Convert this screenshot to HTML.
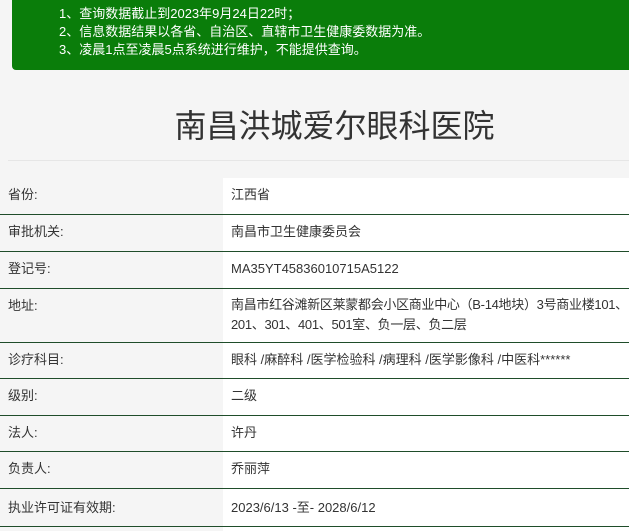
<!DOCTYPE html><html><head><meta charset="utf-8"><style>
body{margin:0;width:629px;height:531px;overflow:hidden;background:#f5f5f5;font-family:"Liberation Sans","Noto Sans CJK SC",sans-serif;color:#333}
.g{position:absolute;left:12px;top:-5px;width:630px;height:75px;background:#0a7d0a;border-radius:4px;color:#fff;font-size:13px;line-height:16px}
.g div{position:absolute;left:47px}
h1{position:absolute;top:104px;left:0;width:669px;text-align:center;margin:0;font-weight:normal;font-size:32px;color:#333;line-height:44px}
.hr{position:absolute;top:160px;left:8px;width:621px;height:1px;background:#e6e6e6}
.wt{position:absolute;left:223px;top:178px;width:406px;height:353px;background:#fff}
.r{position:absolute;left:0;width:629px;border-bottom:1px solid #1f4d2a;font-size:13px;line-height:20px}
.r span{position:absolute;left:8px}
.r b{position:absolute;left:231px;font-weight:normal;white-space:nowrap}
</style></head><body>
<div class="g"><div style="top:11px">1、查询数据截止到2023年9月24日22时；</div><div style="top:29px">2、信息数据结果以各省、自治区、直辖市卫生健康委数据为准。</div><div style="top:47px">3、凌晨1点至凌晨5点系统进行维护，不能提供查询。</div></div>
<h1>南昌洪城爱尔眼科医院</h1>
<div class="hr"></div>
<div class="wt"></div>
<div class="r" style="top:178px;height:36px"><span style="top:7px">省份:</span><b style="top:7px">江西省</b></div>
<div class="r" style="top:215px;height:36px"><span style="top:7px">审批机关:</span><b style="top:7px">南昌市卫生健康委员会</b></div>
<div class="r" style="top:252px;height:36px"><span style="top:7px">登记号:</span><b style="top:7px">MA35YT45836010715A5122</b></div>
<div class="r" style="top:289px;height:53px"><span style="top:7px">地址:</span><b style="top:6px;letter-spacing:-0.3px">南昌市红谷滩新区莱蒙都会小区商业中心（B-14地块）3号商业楼101、<br>201、301、401、501室、负一层、负二层</b></div>
<div class="r" style="top:343px;height:35px"><span style="top:7px">诊疗科目:</span><b style="top:7px">眼科 /麻醉科 /医学检验科 /病理科 /医学影像科 /中医科******</b></div>
<div class="r" style="top:379px;height:36px"><span style="top:7px">级别:</span><b style="top:7px">二级</b></div>
<div class="r" style="top:416px;height:35px"><span style="top:7px">法人:</span><b style="top:7px">许丹</b></div>
<div class="r" style="top:452px;height:36px"><span style="top:7px">负责人:</span><b style="top:7px">乔丽萍</b></div>
<div class="r" style="top:489px;height:37px"><span style="top:9px">执业许可证有效期:</span><b style="top:9px">2023/6/13 -至- 2028/6/12</b></div>
</body></html>
